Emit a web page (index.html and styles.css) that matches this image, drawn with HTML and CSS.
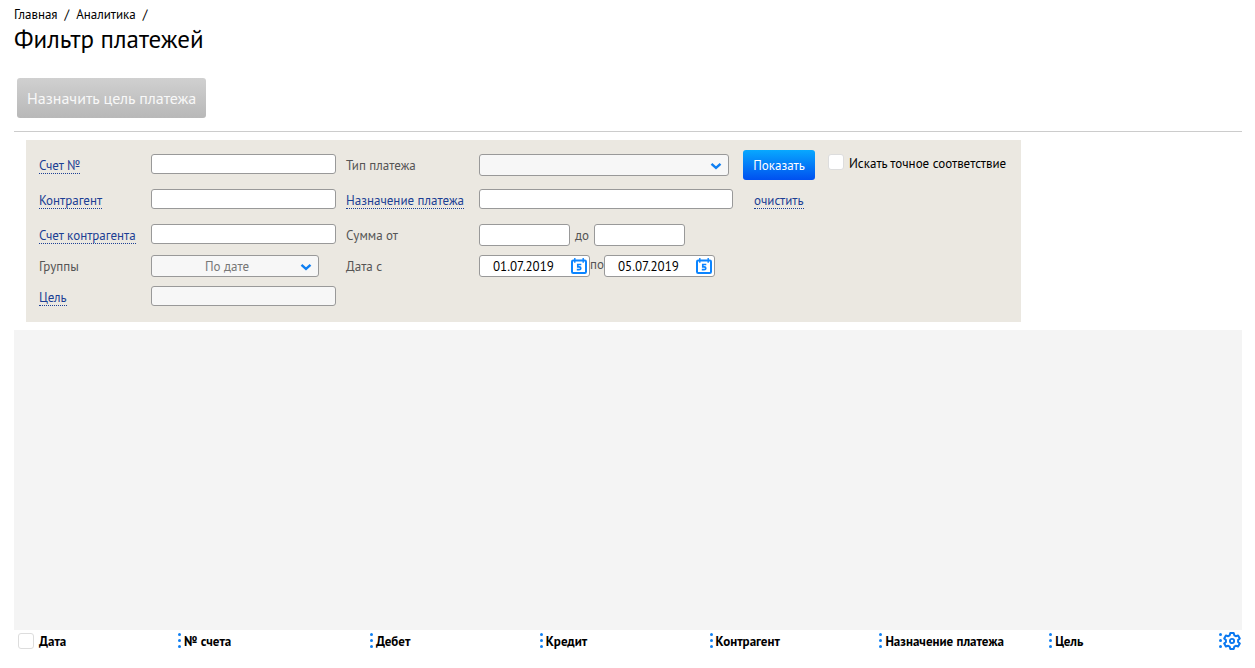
FILE: index.html
```html
<!DOCTYPE html>
<html lang="ru">
<head>
<meta charset="utf-8">
<title>Фильтр платежей</title>
<link rel="stylesheet" href="styles.css">
</head>
<body>
<svg class="defs" aria-hidden="true">
  <symbol id="chevron" viewBox="0 0 12 8"><path d="M1.500 1.800 6 5.900l4.500-4.100" fill="none" stroke="#0f7ff2" stroke-width="2.400"/></symbol>
  <symbol id="calendar" viewBox="0 0 16 16">
    <rect x="1" y="2.500" width="14" height="12.500" rx="1.200" fill="none" stroke="#0a84ff" stroke-width="2"/>
    <path d="M3.800 0v4.800M12.200 0v4.800" stroke="#0a84ff" stroke-width="1.400"/>
    <path d="M10.300 6.500H6.800v2.300h1.300q1.700 0 1.700 1.400t-1.700 1.400H5.800" fill="none" stroke="#0a84ff" stroke-width="1.700"/>
  </symbol>
  <symbol id="gear" viewBox="0 0 18 18">
    <path d="M7.300 1h3.400l.6 2.300 1.500.9 2.300-.7 1.700 2.900L15.100 8v2l1.700 1.600-1.700 2.900-2.300-.7-1.500.9-.6 2.300H7.300l-.6-2.300-1.500-.9-2.300.7-1.700-2.900L2.900 10V8L1.200 6.400l1.700-2.900 2.300.7 1.500-.9z" fill="none" stroke="#0a78f0" stroke-width="2" stroke-linejoin="round"/>
    <circle cx="9" cy="9" r="2.100" fill="none" stroke="#0a78f0" stroke-width="1.900"/>
  </symbol>
  <symbol id="dots" viewBox="0 0 3 16">
    <g fill="#0f7ff2"><circle cx="1.500" cy="1.500" r="1.500"/><circle cx="1.500" cy="7.500" r="1.500"/><circle cx="1.500" cy="13.500" r="1.500"/></g>
  </symbol>
</svg>

<header class="page-head">
  <nav class="crumbs" aria-label="Навигация">
    <a href="#">Главная</a><span>/</span><a href="#">Аналитика</a><span>/</span>
  </nav>
  <h1 class="title">Фильтр платежей</h1>
</header>

<div class="toolbar">
  <button class="btn-assign" type="button" disabled>Назначить цель платежа</button>
</div>

<form class="filter">
  <div class="label"><a class="pick" href="#" id="l-acc">Счет №</a></div>
  <input class="field" type="text" aria-labelledby="l-acc">
  <label class="label" for="type">Тип платежа</label>
  <div class="select-box select-wide">
    <select class="select" id="type"><option></option></select>
    <svg class="chevron"><use href="#chevron"/></svg>
  </div>
  <button class="btn-show" type="button">Показать</button>
  <label class="exact"><input class="check" type="checkbox">Искать точное соответствие</label>

  <div class="label row-start"><a class="pick" href="#" id="l-agent">Контрагент</a></div>
  <input class="field" type="text" aria-labelledby="l-agent">
  <div class="label"><a class="pick" href="#" id="l-purpose">Назначение платежа</a></div>
  <input class="field field-wide" type="text" aria-labelledby="l-purpose">
  <div class="label clear"><a class="pick" href="#">очистить</a></div>

  <div class="label row-start"><a class="pick" href="#" id="l-agent-acc">Счет контрагента</a></div>
  <input class="field" type="text" aria-labelledby="l-agent-acc">
  <label class="label" for="sum-from">Сумма от</label>
  <div class="range range-sum">
    <input class="field field-sum" type="text" id="sum-from">
    <label class="label" for="sum-to">до</label>
    <input class="field field-sum" type="text" id="sum-to">
  </div>

  <label class="label row-start" for="group">Группы</label>
  <div class="select-box select-narrow">
    <select class="select" id="group"><option>По дате</option></select>
    <svg class="chevron"><use href="#chevron"/></svg>
  </div>
  <label class="label" for="date-from">Дата с</label>
  <div class="range">
    <div class="date">
      <input class="date-input" type="text" id="date-from" value="01.07.2019">
      <button class="icon-btn" type="button" aria-label="Календарь"><svg class="cal"><use href="#calendar"/></svg></button>
    </div>
    <label class="to" for="date-to">по</label>
    <div class="date">
      <input class="date-input" type="text" id="date-to" value="05.07.2019">
      <button class="icon-btn" type="button" aria-label="Календарь"><svg class="cal"><use href="#calendar"/></svg></button>
    </div>
  </div>

  <div class="label row-start"><a class="pick" href="#" id="l-goal">Цель</a></div>
  <input class="field field-off" type="text" aria-labelledby="l-goal" readonly>
</form>

<main class="chart"></main>

<table class="grid">
  <thead>
    <tr>
      <th class="col-date"><div class="cell first"><input class="check" type="checkbox" id="all"><label class="name" for="all">Дата</label></div></th>
      <th class="col-acc"><div class="cell"><svg class="dots"><use href="#dots"/></svg><span class="name">№ счета</span></div></th>
      <th><div class="cell"><svg class="dots"><use href="#dots"/></svg><span class="name">Дебет</span></div></th>
      <th><div class="cell"><svg class="dots"><use href="#dots"/></svg><span class="name">Кредит</span></div></th>
      <th><div class="cell"><svg class="dots"><use href="#dots"/></svg><span class="name">Контрагент</span></div></th>
      <th><div class="cell"><svg class="dots"><use href="#dots"/></svg><span class="name">Назначение платежа</span></div></th>
      <th><div class="cell"><svg class="dots"><use href="#dots"/></svg><span class="name">Цель</span></div></th>
      <th class="col-set"><div class="cell last"><svg class="dots"><use href="#dots"/></svg><button class="icon-btn" type="button" aria-label="Настройки"><svg class="gear"><use href="#gear"/></svg></button></div></th>
    </tr>
  </thead>
</table>
</body>
</html>
```
FILE: styles.css
```css
* { box-sizing: border-box; }

body {
  margin: 0;
  padding: 6px 13px 16px 14px;
  background: #fff;
  color: #000;
  font: 13px/18px "PT Sans", "Noto Sans", sans-serif;
}

input, select, button { font: inherit; margin: 0; }
.defs { display: none; }

.crumbs { display: flex; gap: 7px; }
.crumbs a { color: inherit; text-decoration: none; }
.title { margin: 0; font-size: 25px; line-height: 30px; font-weight: 400; }

.toolbar {
  margin-bottom: 8px;
  padding: 24px 3px 13px;
  border-bottom: 1px solid #ccc;
}
.btn-assign {
  display: block;
  height: 40px;
  padding: 0 10px;
  border: 0;
  border-radius: 3px;
  background: linear-gradient(#d0d0d0, #b8b8b8);
  color: #f8f8f8;
  font-size: 16px;
  font-weight: 500;
}

.filter {
  display: grid;
  grid-template-columns: 112px 195px 133px 264px 85px auto;
  grid-template-rows: 35px 35px 31px 31px 22px;
  align-items: start;
  width: fit-content;
  margin-left: 12px;
  padding: 14px 15px 14px 13px;
  background: #ebe8e1;
}
.row-start { grid-column-start: 1; }
.label { color: #555; line-height: 24px; white-space: nowrap; }
.pick {
  display: inline-block;
  border-bottom: 1px dotted #1c3f94;
  color: #1c3f94;
  line-height: 15px;
  text-decoration: none;
}
.clear { padding-left: 11px; }

.field {
  width: 185px;
  height: 20px;
  padding: 0 6px;
  border: 1px solid #999;
  border-radius: 3px;
  background: #fff;
}
.field-wide { width: 254px; }
.field-sum { width: 91px; height: 22px; }
.field-off { background: #f7f7f7; }

.select-box { position: relative; }
.select-wide { width: 250px; }
.select-narrow { width: 168px; }
.select {
  display: block;
  width: 100%;
  height: 22px;
  padding: 2px 16px 0 0;
  border: 1px solid #999;
  border-radius: 3px;
  background: #f7f7f7;
  color: #777;
  text-align: center;
  text-align-last: center;
  appearance: none;
}
.chevron {
  position: absolute;
  top: 8px;
  right: 7px;
  width: 12px;
  height: 8px;
  pointer-events: none;
}

.range { display: flex; }
.range-sum { gap: 5px; }
.to { color: #555; line-height: 20px; width: 14px; }
.date {
  display: flex;
  align-items: center;
  width: 111px;
  height: 22px;
  padding-right: 2px;
  border: 1px solid #999;
  border-radius: 3px;
  background: #fff;
}
.date-input {
  flex: 1;
  min-width: 0;
  height: 20px;
  padding: 0 0 0 13px;
  border: 0;
  background: none;
}
.icon-btn {
  display: block;
  padding: 0;
  border: 0;
  background: none;
}
.cal { display: block; width: 16px; height: 16px; }
.gear { display: block; width: 18px; height: 18px; }

.btn-show {
  height: 30px;
  width: 72px;
  margin-top: -4px;
  padding: 2px 0 0;
  border: 0;
  border-radius: 3px;
  background: linear-gradient(#08a8ff, #0050f0);
  color: #fff;
}
.exact { display: flex; gap: 5px; line-height: 20px; white-space: nowrap; }
.check {
  flex: none;
  width: 16px;
  height: 16px;
  border: 1px solid #ddd;
  border-radius: 3px;
  background: #fff;
  appearance: none;
}

.chart { min-height: 300px; margin-top: 8px; background: #f4f4f4; }

.grid { width: 100%; border-collapse: collapse; table-layout: fixed; }
.grid th { padding: 0; text-align: left; font-weight: 700; }
.col-date { width: 164px; }
.col-acc { width: 192px; }
.col-set { width: 23px; }
.cell { display: flex; align-items: center; gap: 3px; height: 22px; white-space: nowrap; }
.name { padding-top: 2px; }
.first { gap: 5px; padding-left: 4px; }
.last { gap: 1px; }
.dots { flex: none; width: 3px; height: 16px; }
```
